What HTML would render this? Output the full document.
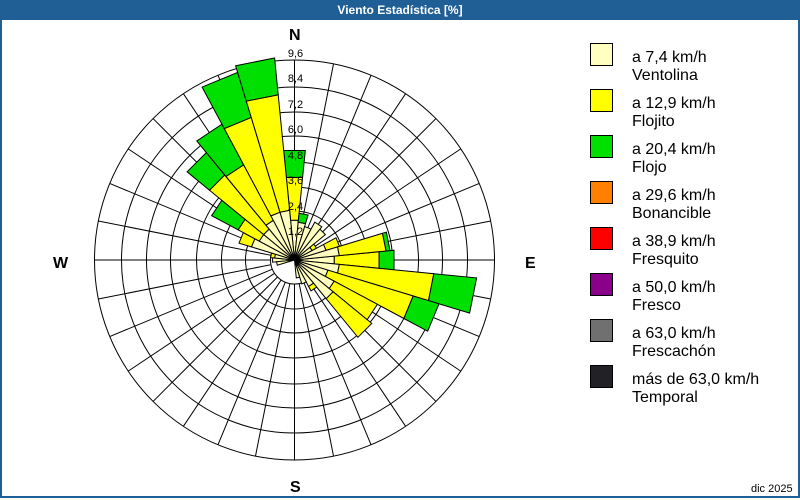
<!DOCTYPE html>
<html><head><meta charset="utf-8"><style>
body{margin:0;width:800px;height:500px;overflow:hidden;background:#fff;font-family:"Liberation Sans","DejaVu Sans",sans-serif}
#wrap{position:absolute;left:0;top:0;width:796px;height:496px;border:2px solid #1f5f96;border-top:none;background:#fff}
#title{position:absolute;left:0;top:0;width:800px;height:20px;background:#1f5f96;color:#fff;font-weight:bold;font-size:12px;text-align:center;line-height:20px}
.lb{position:absolute;left:590px;width:21px;height:21px;border:1px solid #000}
.lt{position:absolute;left:632px;font-size:16px;line-height:18px;color:#000}
.c{position:absolute;font-weight:bold;font-size:16px}
</style></head><body>
<div id="wrap"></div>
<div id="title">Viento Estadística [%]</div>
<svg id="s" width="800" height="500" style="position:absolute;left:0;top:0"></svg>
<div class="c" style="left:289px;top:27px">N</div>
<div class="c" style="left:290px;top:479px">S</div>
<div class="c" style="left:525px;top:255px">E</div>
<div class="c" style="left:53px;top:255px">W</div>
<div class="lb" style="top:43px;background:#ffffc0"></div>
<div class="lt" style="top:49px">a 7,4 km/h<br>Ventolina</div>
<div class="lb" style="top:89px;background:#ffff00"></div>
<div class="lt" style="top:95px">a 12,9 km/h<br>Flojito</div>
<div class="lb" style="top:135px;background:#00e000"></div>
<div class="lt" style="top:141px">a 20,4 km/h<br>Flojo</div>
<div class="lb" style="top:181px;background:#ff8000"></div>
<div class="lt" style="top:187px">a 29,6 km/h<br>Bonancible</div>
<div class="lb" style="top:227px;background:#ff0000"></div>
<div class="lt" style="top:233px">a 38,9 km/h<br>Fresquito</div>
<div class="lb" style="top:273px;background:#8b008b"></div>
<div class="lt" style="top:279px">a 50,0 km/h<br>Fresco</div>
<div class="lb" style="top:319px;background:#707070"></div>
<div class="lt" style="top:325px">a 63,0 km/h<br>Frescachón</div>
<div class="lb" style="top:365px;background:#222226"></div>
<div class="lt" style="top:371px">más de 63,0 km/h<br>Temporal</div>
<div style="position:absolute;left:751px;top:483px;font-size:11px">dic 2025</div>
<script>
var s=document.getElementById('s'),cx=294.5,cy=260,h='';
var rings=[24,49,73,98,124,148,173,200];
rings.forEach(function(r){h+='<circle cx="'+cx+'" cy="'+cy+'" r="'+r+'" fill="none" stroke="#000" stroke-width="1"/>';});
for(var i=0;i<32;i++){var a=i*11.25*Math.PI/180;h+='<line x1="'+(cx+24*Math.sin(a))+'" y1="'+(cy-24*Math.cos(a))+'" x2="'+(cx+200*Math.sin(a))+'" y2="'+(cy-200*Math.cos(a))+'" stroke="#000" stroke-width="1"/>';}
var d={0:[40,83,110],11.25:[38,38,47],22.5:[35],33.75:[43],45:[40],56.25:[20,25],67.5:[33,47],78.75:[45,92,96],90:[40,85,100],101.25:[45,140,183],112.5:[35,124,151],123.75:[45,94],135:[50,100],146.25:[30,35],157.5:[25],168.75:[18],258.75:[18],270:[22],281.25:[20,24],292.5:[45,58],303.75:[40,64,94],315:[40,110,139],326.25:[45,108,154],337.5:[50,149,196],348.75:[50,166,203]};
var cols=['#ffffc0','#ffff00','#00e000'];
function pt(r,a){a=a*Math.PI/180;return (cx+r*Math.sin(a)).toFixed(1)+','+(cy-r*Math.cos(a)).toFixed(1);}
for(var k in d){var a=parseFloat(k),v=d[k],r0=0;for(var j=0;j<v.length;j++){var r1=v[j];if(r1>r0){h+='<polygon points="'+pt(r0,a-5.625)+' '+pt(r1,a-5.625)+' '+pt(r1,a+5.625)+' '+pt(r0,a+5.625)+'" fill="'+cols[j]+'" stroke="#000" stroke-width="1"/>';}r0=r1;}}
var labs=['1,2','2,4','3,6','4,8','6,0','7,2','8,4','9,6'],ys=[235,210,184,159,133,108,82,57];
for(var i=0;i<8;i++)h+='<text x="'+(cx+1)+'" y="'+ys[i]+'" font-family="Liberation Sans,sans-serif" font-size="11" text-anchor="middle" fill="#000">'+labs[i]+'</text>';
s.innerHTML=h;
</script>
</body></html>
